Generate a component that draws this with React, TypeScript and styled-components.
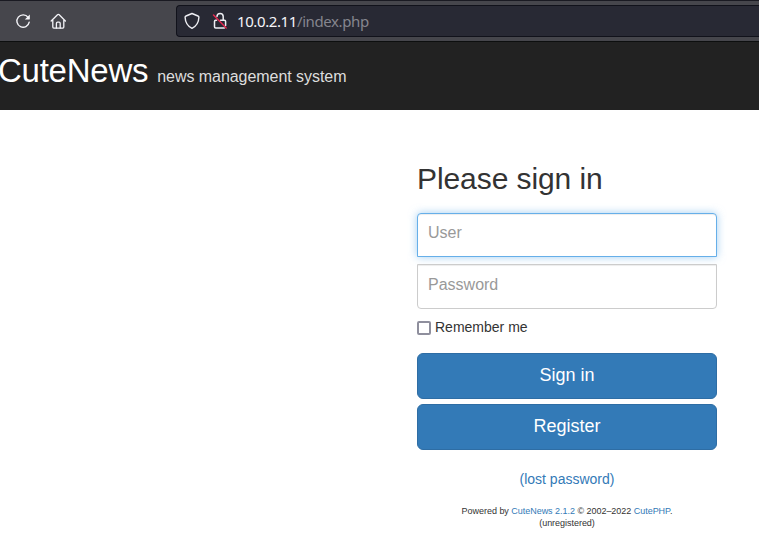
import React from "react";
import styled, { createGlobalStyle } from "styled-components";

const GlobalStyle = createGlobalStyle`
  * { box-sizing: border-box; }
  body {
    margin: 0;
    overflow: hidden;
    background: #fff;
    color: #333;
    font: 14px/20px "Liberation Sans", Arial, sans-serif;
  }
`;

const Page = styled.div`
  width: 759px;
  height: 535px;
  overflow: hidden;
`;

const BrowserBar = styled.div`
  display: flex;
  align-items: flex-start;
  height: 42px;
  padding: 4px 0 0 15px;
  background: #46464c;
  border-top: 1px solid #1a1a22;
  border-bottom: 1px solid #0d0f0f;
`;

const ToolButton = styled.span`
  display: flex;
  width: 16px;
  height: 16px;
  margin: 8px 19px 0 0;
  color: #f4f4f8;
`;

const AddressBar = styled.div`
  display: flex;
  align-items: center;
  flex: 1;
  height: 32px;
  margin-left: 91px;
  padding-left: 7px;
  background: #282934;
  border: 1px solid #11121b;
  border-right: 0;
  border-radius: 4px 0 0 4px;
  color: #eeeef3;
`;

const AddressIcon = styled.span<{ $gap: number }>`
  display: flex;
  margin-right: ${(p) => p.$gap}px;
`;

const Address = styled.span`
  font: 15px/20px "Noto Sans", sans-serif;
  letter-spacing: -0.4px;
  color: #f5f5f9;
  white-space: pre;
`;

const AddressPath = styled.span`
  color: #85858e;
  letter-spacing: -0.4px;
`;

const SiteHeader = styled.header`
  display: flex;
  align-items: baseline;
  height: 68px;
  padding-top: 9px;
  background: #222;
`;

const Brand = styled.h1`
  margin: 0 9px 0 -2px;
  font-size: 33px;
  font-weight: 400;
  line-height: 40px;
  letter-spacing: -0.25px;
  color: #fff;
`;

const Tagline = styled.span`
  font-size: 16px;
  letter-spacing: -0.05px;
  color: #ddd;
`;

const SignInForm = styled.form`
  display: flex;
  flex-direction: column;
  width: 300px;
  margin: 52px 0 0 417px;
`;

const Heading = styled.h2`
  margin: 0 0 18px;
  font-size: 30px;
  font-weight: 400;
  line-height: 33px;
  letter-spacing: -0.08px;
`;

const Field = styled.input<{ $active?: boolean; $end: "top" | "bottom" }>`
  width: 100%;
  height: ${(p) => (p.$active ? 44 : 45)}px;
  margin: 0 0 ${(p) => (p.$active ? 7 : 8)}px;
  padding: 0 10px 4px;
  border: 1px solid ${(p) => (p.$active ? "#66afe9" : "#ccc")};
  border-radius: ${(p) => (p.$end === "top" ? "4px 4px 0 0" : "0 0 4px 4px")};
  outline: 0;
  box-shadow: ${(p) =>
    p.$active
      ? "inset 0 1px 1px rgba(0,0,0,.075), 0 0 8px rgba(102,175,233,.6)"
      : "inset 0 1px 1px rgba(0,0,0,.075)"};
  font: 16px "Liberation Sans", Arial, sans-serif;
  &::placeholder { color: #999; opacity: 1; }
`;

const Remember = styled.label`
  display: flex;
  align-items: center;
  gap: 4px;
  height: 20px;
  margin-bottom: 16px;
`;

const Checkbox = styled.input`
  appearance: none;
  width: 14px;
  height: 14px;
  margin: 1px 0 0;
  border: 2px solid #8f8f9d;
  border-radius: 2px;
  background: #fff;
`;

const Button = styled.button`
  height: 46px;
  margin: 0 0 5px;
  padding: 0 0 2px;
  background: #337ab7;
  border: 1px solid #2e6da4;
  border-radius: 6px;
  font: 18px/24px "Liberation Sans", Arial, sans-serif;
  color: #fff;
`;

const Link = styled.a`
  color: #337ab7;
  text-decoration: none;
`;

const LostPassword = styled.div`
  margin-top: 14px;
  text-align: center;
`;

const Credits = styled.footer`
  margin-top: 16px;
  font-size: 9px;
  line-height: 12px;
  letter-spacing: -0.03px;
  text-align: center;
`;

const ReloadIcon = () => (
  <svg width="16" height="16" viewBox="0 0 16 16" fill="none">
    <path d="M13.1 4.4A6.2 6.2 0 1 0 14.2 9.2" stroke="currentColor" strokeWidth="1.4" strokeLinecap="round" />
    <path d="M14.8 1.6v4.500a.4.4 0 0 1-.4.4H9.800Z" fill="currentColor" />
  </svg>
);

const HomeIcon = () => (
  <svg width="16" height="16" viewBox="0 0 16 16" fill="none" stroke="currentColor" strokeWidth="1.3" strokeLinecap="round" strokeLinejoin="round">
    <path d="M1.2 8 7.500 1.800a1.200 1.200 0 0 1 1.700 0L15.400 8M2.800 7v7.100c0 .6.4 1 1 1h9c.6 0 1-.4 1-1V7" />
    <path d="M6.400 15V10.400c0-.7.5-1.200 1.200-1.200H9c.7 0 1.200.5 1.200 1.200V15" />
  </svg>
);

const ShieldIcon = () => (
  <svg width="16" height="18" viewBox="0 0 16 18" fill="none" stroke="currentColor" strokeWidth="1.4" strokeLinejoin="round">
    <path d="M8 1.500 14 4c.6.2.9.7.9 1.300-.2 5.100-2.500 8.900-6.900 11.100C3.600 14.200 1.300 10.400 1.100 5.300 1.100 4.700 1.400 4.200 2 4Z" />
  </svg>
);

const InsecureLockIcon = () => (
  <svg width="16" height="18" viewBox="0 0 16 18" fill="none" strokeLinecap="round">
    <g stroke="currentColor" strokeWidth="1.5" strokeLinejoin="round">
      <path d="M5 4.500a3.100 3.100 0 0 1 6.200 0v3.800h1.300c.7 0 1.100.5 1.100 1.100v4.200" />
      <path d="M4.500 8.300H3.700c-.7 0-1.200.5-1.200 1.200v5.300c0 .7.5 1.200 1.200 1.200h8.600" />
      <path d="M8.500 8.300h2.700" />
    </g>
    <path d="M1.500 3 14.200 16" stroke="#e22850" strokeWidth="1.5" />
  </svg>
);

export default function App() {
  return (
    <Page>
      <GlobalStyle />
      <BrowserBar>
        <ToolButton><ReloadIcon /></ToolButton>
        <ToolButton><HomeIcon /></ToolButton>
        <AddressBar>
          <AddressIcon $gap={12}><ShieldIcon /></AddressIcon>
          <AddressIcon $gap={9}><InsecureLockIcon /></AddressIcon>
          <Address>10.0.2.11<AddressPath>/index.php</AddressPath></Address>
        </AddressBar>
      </BrowserBar>
      <SiteHeader>
        <Brand>CuteNews</Brand>
        <Tagline>news management system</Tagline>
      </SiteHeader>
      <SignInForm onSubmit={(e) => e.preventDefault()}>
        <Heading>Please sign in</Heading>
        <Field $active $end="top" placeholder="User" />
        <Field $end="bottom" type="password" placeholder="Password" />
        <Remember><Checkbox type="checkbox" />Remember me</Remember>
        <Button type="submit">Sign in</Button>
        <Button type="button">Register</Button>
        <LostPassword><Link href="#">(lost password)</Link></LostPassword>
        <Credits>
          Powered by <Link href="#">CuteNews 2.1.2</Link> © 2002–2022 <Link href="#">CutePHP</Link>.<br />
          (unregistered)
        </Credits>
      </SignInForm>
    </Page>
  );
}
